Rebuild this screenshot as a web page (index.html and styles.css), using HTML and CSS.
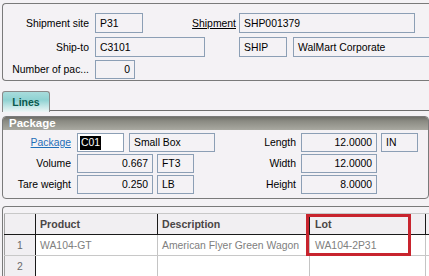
FILE: index.html
```html
<!DOCTYPE html>
<html>
<head>
<meta charset="utf-8">
<link rel="stylesheet" href="styles.css">
</head>
<body>
<div class="page">
  <div class="group top">
    <div class="row r1">
      <span class="lbl lw">Shipment site</span>
      <div class="fld w48">P31</div>
      <span class="lbl ship-lbl"><u>Shipment</u></span>
      <div class="fld w176">SHP001379</div>
    </div>
    <div class="row r2">
      <span class="lbl lw">Ship-to</span>
      <div class="fld w110">C3101</div>
      <span class="sp34"></span>
      <div class="fld w48">SHIP</div>
      <div class="fld w136 ml6">WalMart Corporate</div>
    </div>
    <div class="row r3">
      <span class="lbl lw">Number of pac...</span>
      <div class="fld w40 num">0</div>
    </div>
  </div>

  <div class="tabstrip">
    <div class="tab">Lines</div>
    <div class="tabline"></div>
  </div>

  <div class="group pkg">
    <div class="pkg-head">Package</div>
    <div class="prow p1">
      <span class="lbl plw"><a class="link">Package</a></span>
      <div class="fld w47 white"><span class="sel">C01</span></div>
      <div class="fld w86 ml5">Small Box</div>
      <span class="lbl rlw">Length</span>
      <div class="fld w76 num">12.0000</div>
      <div class="fld w37 ml4">IN</div>
    </div>
    <div class="prow">
      <span class="lbl plw">Volume</span>
      <div class="fld w76 num">0.667</div>
      <div class="fld w37 ml4">FT3</div>
      <span class="lbl rlw2">Width</span>
      <div class="fld w76 num">12.0000</div>
    </div>
    <div class="prow">
      <span class="lbl plw">Tare weight</span>
      <div class="fld w76 num">0.250</div>
      <div class="fld w37 ml4">LB</div>
      <span class="lbl rlw2">Height</span>
      <div class="fld w76 num">8.0000</div>
    </div>
  </div>

  <div class="gridbox">
    <table class="grid">
      <thead>
        <tr>
          <th class="rh"></th>
          <th class="c-prod">Product</th>
          <th class="c-desc">Description</th>
          <th class="c-lot">Lot</th>
          <th class="c-x"></th>
        </tr>
      </thead>
      <tbody>
        <tr>
          <td class="rh">1</td>
          <td>WA104-GT</td>
          <td>American Flyer Green Wagon</td>
          <td>WA104-2P31</td>
          <td></td>
        </tr>
        <tr>
          <td class="rh">2</td>
          <td></td>
          <td></td>
          <td></td>
          <td></td>
        </tr>
      </tbody>
    </table>
  </div>
  <div class="highlight"></div>
</div>
</body>
</html>
```

FILE: styles.css
```css
html, body {
  margin: 0;
  padding: 0;
  width: 429px;
  height: 276px;
  overflow: hidden;
  background: #f4f2f5;
}

.page {
  position: relative;
  width: 429px;
  height: 276px;
  overflow: hidden;
  font-family: "Liberation Sans", Arial, sans-serif;
  font-size: 10.4px;
  color: #000;
  padding-top: 3px;
  box-sizing: border-box;
}

.group {
  margin-left: 2px;
  border: 1px solid #7a7a7a;
  box-sizing: border-box;
}

.top {
  width: 427px;
  height: 78px;
  border-radius: 4px 0 0 4px;
  border-right: none;
  padding-top: 9px;
  overflow: hidden;
}

.row {
  display: flex;
  align-items: center;
  height: 20px;
}
.r2 { margin-top: 4px; }
.r3 { margin-top: 3px; height: 19px; }

.lbl {
  display: block;
  text-align: right;
  white-space: nowrap;
  box-sizing: border-box;
  flex: none;
}
.lw { width: 92px; padding-right: 6px; }
.ship-lbl { width: 96px; padding-right: 3px; }
.sp34 { width: 34px; flex: none; }

.fld {
  height: 100%;
  box-sizing: border-box;
  border: 1px solid #8c9fb5;
  padding: 0 4px;
  display: flex;
  align-items: center;
  white-space: nowrap;
  overflow: hidden;
  flex: none;
}
.num { justify-content: flex-end; padding-right: 4px; }
.white { background: #fff; padding-left: 2px; }
.sel { background: #000; color: #fff; padding: 0 1px; line-height: 14px; }

.w37 { width: 37px; }
.w40 { width: 40px; }
.w47 { width: 47px; }
.w48 { width: 48px; }
.w76 { width: 76px; }
.w86 { width: 86px; }
.w110 { width: 110px; }
.w136 { width: 136px; border-right: none; }
.w176 { width: 176px; }
.ml4 { margin-left: 4px; }
.ml5 { margin-left: 5px; }
.ml6 { margin-left: 6px; }

.tabstrip {
  display: flex;
  align-items: flex-end;
  margin-top: 10px;
  height: 21px;
}
.tab {
  margin-left: 2px;
  width: 48px;
  height: 21px;
  box-sizing: border-box;
  border: 1px solid #8a8a8a;
  border-bottom: none;
  border-radius: 3px 3px 0 0;
  background: linear-gradient(#a8dcdc 0%, #8fd2d2 40%, #c8e8e8 75%, #eef6f6 100%);
  color: #0a5a4e;
  font-weight: bold;
  font-size: 10.5px;
  text-align: center;
  line-height: 20px;
}
.tabline {
  flex: 1;
  height: 1px;
  background: #6e6e6e;
  margin-bottom: 1px;
}

.pkg {
  margin-top: 4px;
  width: 427px;
  height: 83px;
  border-radius: 4px;
  overflow: hidden;
}
.pkg-head {
  height: 13px;
  background: linear-gradient(#6e6e68 0%, #8a8a82 30%, #a9a9a1 100%);
  color: #fff;
  font-weight: bold;
  font-size: 11.5px;
  line-height: 13px;
  padding-left: 6px;
}
.prow {
  display: flex;
  align-items: center;
  height: 19px;
  margin-top: 2px;
}
.p1 { margin-top: 3px; }
.plw { width: 74px; padding-right: 6px; }
.rlw { width: 86px; padding-right: 5px; }
.rlw2 { width: 107px; padding-right: 5px; }
.link { color: #1f6fb8; text-decoration: underline; }

.gridbox {
  margin-top: 7px;
  margin-left: 2px;
  width: 427px;
  height: 80px;
  border: 1px solid #7a7a7a;
  border-right: none;
  border-radius: 4px 0 0 0;
  box-sizing: border-box;
  padding-top: 6px;
  padding-left: 1px;
  overflow: hidden;
}
.grid {
  border-collapse: collapse;
  table-layout: fixed;
  width: 430px;
}
.grid th, .grid td {
  height: 20px;
  padding: 0 4px;
  text-align: left;
  white-space: nowrap;
  overflow: hidden;
  box-sizing: border-box;
}
.grid th {
  font-weight: bold;
  font-size: 10.6px;
  color: #4a4646;
  background: #f1eff2;
  border-top: 1px solid #c8c8c8;
  border-left: 1px solid #1a1a1a;
  border-bottom: 1px solid #1a1a1a;
  height: 21px;
}
.grid th.rh { border-left: 1px solid #a0a0a0; }
.grid td {
  color: #808080;
  background: #fff;
  border-left: 1px solid #c4c4c4;
  border-bottom: 1px solid #c8c8c8;
  height: 21px;
}
.grid td.rh {
  background: #f1eff2;
  text-align: center;
  color: #6a6a6a;
  border-left: 1px solid #a0a0a0;
  border-right: 1px solid #1a1a1a;
}
.grid th.rh { width: 31px; }
.c-prod { width: 122px; }
.c-desc { width: 152px; }
.grid th.c-lot, .grid td:nth-child(4) { padding-left: 5px; }
.c-lot { width: 116px; }
.c-x { width: 9px; }

.highlight {
  position: absolute;
  left: 306px;
  top: 214px;
  width: 105px;
  height: 42px;
  box-sizing: border-box;
  border: 3px solid #c8242e;
}
```
